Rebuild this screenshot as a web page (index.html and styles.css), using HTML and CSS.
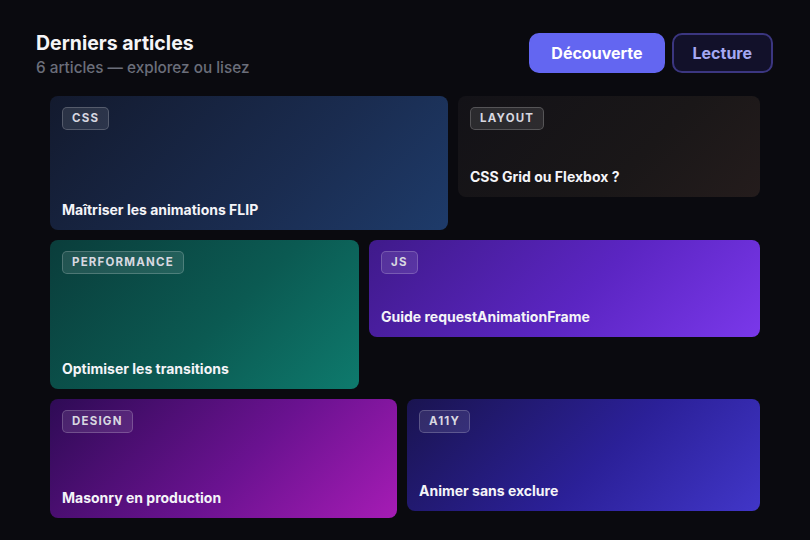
FILE: index.html
```html
<!DOCTYPE html>
<html lang="fr">
<head>
    <meta charset="UTF-8">
    <meta name="viewport" content="width=device-width, initial-scale=1.0">
    <title>Derniers articles</title>
    <link rel="stylesheet" href="styles.css">
</head>
<body>

    <header class="header">
        <div class="heading">
            <h1>Derniers articles</h1>
            <p class="subtitle">6 articles — explorez ou lisez</p>
        </div>
        <div class="modes">
            <button class="mode-btn active">Découverte</button>
            <button class="mode-btn">Lecture</button>
        </div>
    </header>

    <div class="grid">
        <div class="row">
            <article class="card card-css">
                <span class="tag">CSS</span>
                <h2>Maîtriser les animations FLIP</h2>
            </article>
            <article class="card card-layout">
                <span class="tag">Layout</span>
                <h2>CSS Grid ou Flexbox ?</h2>
            </article>
        </div>
        <div class="row">
            <article class="card card-perf">
                <span class="tag">Performance</span>
                <h2>Optimiser les transitions</h2>
            </article>
            <article class="card card-js">
                <span class="tag">JS</span>
                <h2>Guide requestAnimationFrame</h2>
            </article>
        </div>
        <div class="row">
            <article class="card card-design">
                <span class="tag">Design</span>
                <h2>Masonry en production</h2>
            </article>
            <article class="card card-a11y">
                <span class="tag">A11y</span>
                <h2>Animer sans exclure</h2>
            </article>
        </div>
    </div>

</body>
</html>
```

FILE: styles.css
```css
body {
    font-family: Inter, "Noto Sans", sans-serif;
    background-color: #0a0a0f;
    color: #f3f4f6;
    margin: 0;
    padding: 31px 37px 0 36px;
}

.header {
    display: flex;
    justify-content: space-between;
    align-items: flex-start;
    margin-bottom: 18px;
}

.heading h1 {
    font-size: 19.5px;
    font-weight: 700;
    line-height: 24px;
    margin: 0;
    color: #f5f5f7;
}

.subtitle {
    font-size: 15.3px;
    line-height: 20px;
    margin: 3px 0 0;
    color: #6b6e7a;
    font-weight: 500;
}

.modes {
    display: flex;
    gap: 7px;
    padding-top: 2px;
}

.mode-btn {
    font-family: inherit;
    font-size: 16px;
    font-weight: 700;
    height: 40px;
    padding: 0 19px;
    border-radius: 10px;
    border: 2px solid #3b3680;
    background-color: #12112a;
    color: #a5a8f2;
    cursor: pointer;
}

.mode-btn.active {
    background-color: #6366f1;
    border-color: #6366f1;
    color: #ffffff;
    padding: 0 20px;
}

.grid {
    display: flex;
    flex-direction: column;
    gap: 10px;
    padding: 0 13px 0 14px;
}

.row {
    display: flex;
    gap: 10px;
    align-items: flex-start;
}

.card {
    box-sizing: border-box;
    border-radius: 8px;
    padding: 11px 12px 12px;
    display: flex;
    flex-direction: column;
    justify-content: space-between;
    align-items: flex-start;
}

.card h2 {
    font-size: 14px;
    font-weight: 700;
    line-height: 17px;
    margin: 0;
    color: #f4f4f8;
}

.tag {
    font-size: 11.5px;
    font-weight: 700;
    letter-spacing: 1.2px;
    text-transform: uppercase;
    line-height: 21px;
    padding: 0 9px;
    border-radius: 5px;
    border: 1px solid rgba(255, 255, 255, 0.2);
    background-color: rgba(255, 255, 255, 0.1);
    color: #d8d8e0;
}

.card-css {
    width: 398px;
    height: 134px;
    background: linear-gradient(135deg, #131a2e 0%, #1a2c50 60%, #1e3b6a 100%);
}

.card-layout {
    flex: 1;
    height: 101px;
    background: linear-gradient(135deg, #131217 0%, #1a1718 60%, #241c1c 100%);
}

.card-perf {
    width: 309px;
    height: 149px;
    background: linear-gradient(135deg, #0a3d3b 0%, #0b5a52 55%, #0e7a6d 100%);
}

.card-js {
    flex: 1;
    height: 97px;
    background: linear-gradient(135deg, #3f1a8a 0%, #5b25c2 55%, #7a38ea 100%);
}

.card-design {
    width: 347px;
    height: 119px;
    background: linear-gradient(135deg, #2e0b55 0%, #6a1290 55%, #a61cb5 100%);
}

.card-a11y {
    flex: 1;
    height: 112px;
    background: linear-gradient(135deg, #1a1450 0%, #2b2098 55%, #4136c8 100%);
}
```
